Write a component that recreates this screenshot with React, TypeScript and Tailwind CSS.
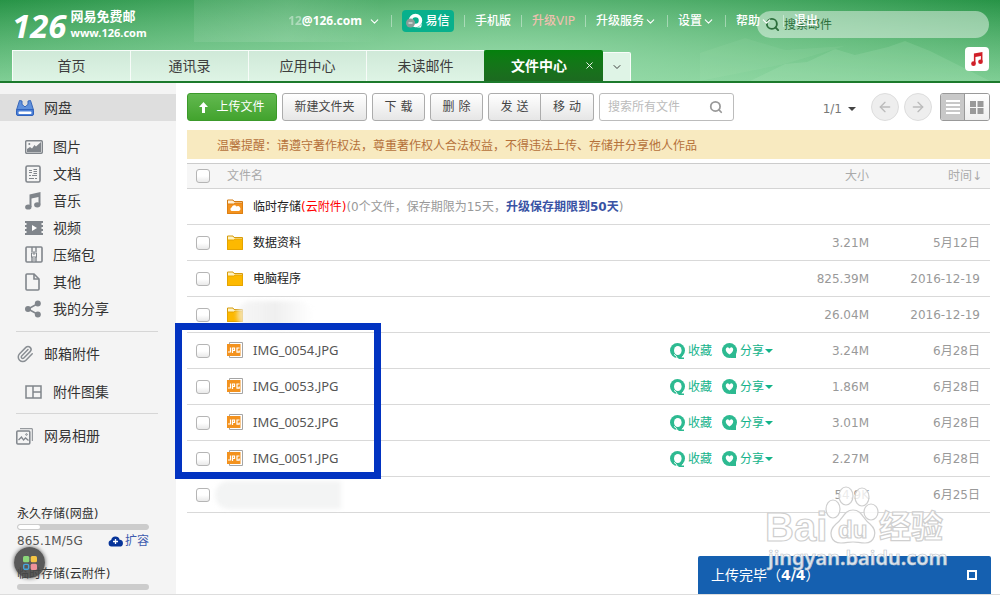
import type { ReactNode } from 'react';
import { ArrowLeft, ArrowRight, ChevronDown, Paperclip, Search, X } from 'lucide-react';

type FileRow = {
  name: string;
  kind: 'cloud' | 'folder' | 'hidden-folder' | 'jpg' | 'hidden';
  size: string;
  date: string;
};

const files: FileRow[] = [
  { name: '临时存储', kind: 'cloud', size: '', date: '' },
  { name: '数据资料', kind: 'folder', size: '3.21M', date: '5月12日' },
  { name: '电脑程序', kind: 'folder', size: '825.39M', date: '2016-12-19' },
  { name: '', kind: 'hidden-folder', size: '26.04M', date: '2016-12-19' },
  { name: 'IMG_0054.JPG', kind: 'jpg', size: '3.24M', date: '6月28日' },
  { name: 'IMG_0053.JPG', kind: 'jpg', size: '1.86M', date: '6月28日' },
  { name: 'IMG_0052.JPG', kind: 'jpg', size: '3.01M', date: '6月28日' },
  { name: 'IMG_0051.JPG', kind: 'jpg', size: '2.27M', date: '6月28日' },
  { name: '', kind: 'hidden', size: '54.9K', date: '6月25日' },
];

const tabs = ['首页', '通讯录', '应用中心', '未读邮件'];

function PictureIcon() {
  return (
    <svg width="18" height="14" viewBox="0 0 18 14">
      <rect x="0.7" y="0.7" width="16.6" height="12.6" rx="1" fill="#f4f4f4" stroke="#80858b" strokeWidth="1.4" />
      <path d="M2 12V9l3-2 2 1.500L9.500 5l1.500 1.500L16 2v10z" fill="#80858b" />
      <circle cx="4.300" cy="4" r="1" fill="#80858b" />
    </svg>
  );
}

function DocIcon() {
  return (
    <svg width="16" height="18" viewBox="0 0 16 18" fill="none" stroke="#80858b">
      <rect x="1" y="1" width="14" height="16" rx="1.5" strokeWidth="1.6" />
      <path d="M4 5.500h3M4 7.500h3M8.500 4.500h3.500M8.500 6.500h3.500M8.500 8.500h3.500M4 10.500h2M7 10.500h5M4 13.500h5M10 13.500h2" />
    </svg>
  );
}

function MusicIcon() {
  return (
    <svg width="16" height="18" viewBox="0 0 16 18" fill="#80858b">
      <path d="M4.500 2.500L15.500 0v12.500h-2V5L6.500 6.500V15h-2z" />
      <ellipse cx="3.300" cy="15" rx="3.200" ry="2.600" />
      <ellipse cx="12.300" cy="12.800" rx="3.200" ry="2.600" />
    </svg>
  );
}

function VideoIcon() {
  return (
    <svg width="18" height="14" viewBox="0 0 18 14">
      <path d="M0 0h18v2h-1.500v2H18v2h-1.500v2H18v2h-1.500v2H18v2H0v-2h1.500v-2H0V8h1.500V6H0V4h1.500V2H0z" fill="#80858b" />
      <path d="M7 4l5 3-5 3z" fill="#fff" />
    </svg>
  );
}

function ZipIcon() {
  return (
    <svg width="18" height="17" viewBox="0 0 18 17" fill="none" stroke="#80858b">
      <rect x="1" y="1" width="16" height="15" rx="1" strokeWidth="1.6" />
      <path d="M7 1v5M11 1v5M7 11v5M11 11v5" strokeWidth="1.400" />
      <rect x="6.500" y="7" width="5" height="4" />
      <path d="M9 5v4M9 12v3" />
    </svg>
  );
}

function OtherIcon() {
  return (
    <svg width="15" height="18" viewBox="0 0 15 18" fill="none" stroke="#80858b" strokeWidth="1.600">
      <path d="M1 2a1 1 0 011-1h7l5 5v10a1 1 0 01-1 1H2a1 1 0 01-1-1z" />
      <path d="M9 1v5h5" />
    </svg>
  );
}

function ShareIcon() {
  return (
    <svg width="16" height="18" viewBox="0 0 16 18" fill="#80858b">
      <path d="M13 3.500L3 9l10 5.500" fill="none" stroke="#80858b" strokeWidth="1.500" />
      <circle cx="12.800" cy="3.500" r="3" />
      <circle cx="3" cy="9" r="3" />
      <circle cx="12.800" cy="14.500" r="3" />
    </svg>
  );
}

function DiskIcon() {
  return (
    <svg width="18" height="16" viewBox="0 0 18 16">
      <path d="M3.500.5L6 1v3.500l1.500 1L9 7l1.500-1.500 1.500-1V1l2.500-.5 3 9.500H.5z" fill="#5f90dc" stroke="#3565b8" />
      <rect x="0.500" y="9.500" width="17" height="6" rx="1.500" fill="#4d80d6" stroke="#2f62bd" />
      <rect x="2.500" y="11.500" width="13" height="2.500" rx="1" fill="#fff" />
    </svg>
  );
}

function AlbumIcon() {
  return (
    <svg width="17" height="17" viewBox="0 0 17 17" fill="none" stroke="#80858b">
      <path d="M4 .7h12.300V13" />
      <rect x="0.800" y="3" width="13" height="13" rx="1" strokeWidth="1.500" />
      <path d="M2.500 12l3-3 2 3 2-2 3 2.500" strokeWidth="1.300" />
      <circle cx="10.500" cy="6.500" r="0.800" />
    </svg>
  );
}

function GalleryIcon() {
  return (
    <svg width="17" height="14" viewBox="0 0 17 14" fill="none" stroke="#80858b" strokeWidth="1.500">
      <path d="M1 1h15v12H1zM8 1v12M8 7h8" />
    </svg>
  );
}

function FileIcon({ kind }: { kind: FileRow['kind'] }) {
  if (kind === 'jpg') {
    return (
      <svg width="16" height="16" viewBox="0 0 16 16">
        <path d="M2.500.5h13v15h-13z" fill="#fff" stroke="#a5a5a5" />
        <rect x="0" y="2" width="13.500" height="12" fill="#f3921e" />
        <path d="M1 10h2.500V5.500M5.500 11V6h2v2.500h-2M12.500 6H10v4.200h2.200V8.500" fill="none" stroke="#fff" strokeWidth="1.200" />
      </svg>
    );
  }
  const cloud = kind === 'cloud';
  return (
    <svg width="16" height="16" viewBox="0 0 16 16">
      <path d="M.5 14.500V1h5.500l1 1.500h8.500v12z" fill={cloud ? '#fff0d6' : '#fff3c4'} stroke={cloud ? '#d27a12' : '#d69b0b'} />
      <path d="M.5 5h6l1.500-1h7.500v10.500H.5z" fill={cloud ? '#f3921e' : '#fdb900'} stroke={cloud ? '#dd7f12' : '#e5a400'} />
      {cloud && <path d="M4.500 12a2 2 0 01.3-3.700A2.500 2.500 0 019.500 7.500 2.300 2.300 0 0112 12z" fill="#fff" />}
    </svg>
  );
}

function CollectIcon() {
  return (
    <svg width="16" height="16" viewBox="0 0 16 16">
      <circle cx="7.500" cy="7.500" r="7.500" fill="#2dba91" />
      <path d="M6 13l7-2-1.500 3.500H14V16H9z" fill="#2dba91" />
      <ellipse cx="7.800" cy="7.500" rx="3.800" ry="4.500" fill="#fff" />
      <path d="M4 11.500c1.500.8 2.500 1.500 3 3.500" stroke="#fff" fill="none" />
    </svg>
  );
}

function HeartIcon() {
  return (
    <svg width="16" height="16" viewBox="0 0 16 16">
      <circle cx="7.500" cy="7.500" r="7.500" fill="#2dba91" />
      <path d="M8 15l6-5v5z" fill="#2dba91" />
      <path d="M7.500 11.500C2 8 3.500 4 6 4.200L7.500 5.500 9 4.200c2.500-.2 4 3.800-1.500 7.300z" fill="#fff" />
    </svg>
  );
}

function Caret({ className }: { className: string }) {
  return (
    <svg width="8" height="4" viewBox="0 0 8 4" className={className}>
      <path d="M0 0h8L4 4z" fill="currentColor" />
    </svg>
  );
}

function CheckBox({ label }: { label: string }) {
  return (
    <input
      type="checkbox"
      aria-label={label}
      className="block size-[14px] appearance-none rounded-[3px] border border-[#b5b5b5] bg-linear-to-b from-white from-50% to-[#e9e9e9]"
    />
  );
}

function MenuLink({ children, arrow, className = 'text-white' }: { children: ReactNode; arrow?: boolean; className?: string }) {
  return (
    <a href="#" className={`flex items-center font-medium ${className}`}>
      {children}
      {arrow && <ChevronDown size={13} strokeWidth={2} />}
    </a>
  );
}

function Divider() {
  return <span className="h-3 w-px bg-white/40" />;
}

function Header() {
  return (
    <header className="relative h-[83px] overflow-hidden border-b-2 border-[#1c7a2c] bg-[radial-gradient(ellipse_60%_170%_at_50%_80%,#a4e2b5c0,transparent),linear-gradient(to_bottom,#239143,#7acb90)]">
      <svg className="absolute right-0 bottom-0" width="300" height="50" viewBox="0 0 300 50">
        <path d="M50 50L85 33l22-2 28-13 20 6 33-8 17-6 25 10 60 30z" fill="#c9f0d2" opacity="0.150" />
        <path d="M0 22l45-15 40 12 60-4-60 18L0 50z" fill="#c9f0d2" opacity="0.080" />
      </svg>
      <form className="absolute top-[11px] right-[11px] flex h-[27px] w-[232px] items-center gap-1 rounded-full bg-white/45 pl-2 text-[#2c6e3c]">
        <Search size={15} strokeWidth={3} />
        <input
          type="search"
          aria-label="搜索邮件"
          placeholder="搜索邮件"
          className="min-w-0 flex-1 bg-transparent text-xs outline-none placeholder:text-[#2c6e3c]"
        />
      </form>

      <div className="pointer-events-none relative flex h-[50px] pl-3">
        <div className="flex w-[182px] items-center gap-1 text-white">
          <span className="font-['Open_Sans'] text-[33px] leading-none font-bold italic">126</span>
          <div className="text-[13px] leading-4 font-bold">
            <p>网易免费邮</p>
            <p className="font-['Noto_Sans'] text-[11px] leading-4">www.126.com</p>
          </div>
        </div>
        <nav className="flex h-[42px] flex-1 items-center gap-[10px] text-xs whitespace-nowrap">
          <a href="#" className="flex h-full w-[187px] items-center justify-end gap-[6px] bg-linear-to-r from-white/8 via-white/12 to-transparent font-['Noto_Sans'] font-bold text-white">
            <span>
              <span className="opacity-40">12</span>@126.com
            </span>
            <ChevronDown size={13} strokeWidth={2} />
          </a>
          <Divider />
          <a href="#" className="flex h-[22px] w-[52px] items-center justify-center gap-[2px] rounded bg-[#08b08c] font-medium text-white">
            <svg width="17" height="16" viewBox="0 0 17 16">
              <circle cx="9.500" cy="7.500" r="5" fill="none" stroke="#fff" strokeWidth="3.500" />
              <path d="M9 14.500c3 0 5-1 7-4l-1 4z" fill="#fff" />
              <circle cx="4.500" cy="10" r="4.500" fill="#8b9c98" />
              <path d="M2.500 10h4" stroke="#fff" />
            </svg>
            易信
          </a>
          <Divider />
          <MenuLink>手机版</MenuLink>
          <Divider />
          <MenuLink className="text-[#f0c0b0]">升级VIP</MenuLink>
          <Divider />
          <MenuLink arrow>升级服务</MenuLink>
          <Divider />
          <MenuLink arrow>设置</MenuLink>
          <Divider />
          <MenuLink arrow>帮助</MenuLink>
          <Divider />
          <MenuLink>退出</MenuLink>
        </nav>
      </div>

      <div className="relative flex h-[31px] items-end pl-3 text-sm text-[#3d3d3d]">
        {tabs.map((tab) => (
          <button key={tab} className="h-[31px] w-[118px] border-t border-l border-white/80 bg-linear-to-b from-[#cfe9d8] to-[#def4e5]">
            {tab}
          </button>
        ))}
        <div className="flex h-[31px] w-[119px] items-center rounded-t-xs bg-linear-to-b from-[#04800c] to-[#1c6a20] text-white">
          <button className="flex-1 pl-[27px] text-left font-bold">文件中心</button>
          <button aria-label="关闭" className="mr-2">
            <X size={11} strokeWidth={2} />
          </button>
        </div>
        <button aria-label="更多标签" className="flex h-[29px] w-[28px] items-center justify-center rounded-tr-xs border-t border-r border-white/80 bg-[#dff4e6]">
          <ChevronDown size={12} strokeWidth={2} />
        </button>
        <button aria-label="音乐" className="mr-[11px] mb-[10px] ml-auto flex size-6 items-center justify-center rounded bg-white">
          <svg width="14" height="14" viewBox="0 0 16 18">
            <path d="M4 2l11-2v12h-2V5L6 6.500V15H4z" fill="#d01f28" />
            <circle cx="3.500" cy="15" r="3" fill="#d01f28" />
            <circle cx="12.500" cy="12.500" r="3" fill="#d01f28" />
          </svg>
        </button>
      </div>
    </header>
  );
}

const folders = [
  { label: '图片', icon: <PictureIcon /> },
  { label: '文档', icon: <DocIcon /> },
  { label: '音乐', icon: <MusicIcon /> },
  { label: '视频', icon: <VideoIcon /> },
  { label: '压缩包', icon: <ZipIcon /> },
  { label: '其他', icon: <OtherIcon /> },
  { label: '我的分享', icon: <ShareIcon /> },
];

function Sidebar() {
  return (
    <aside className="relative flex w-44 shrink-0 flex-col bg-[#f4f4f4] pt-[11px] text-sm text-[#333]">
      <a href="#" className="flex h-[27px] items-center bg-[#dedede] pl-4">
        <span className="w-7"><DiskIcon /></span>网盘
      </a>
      <ul className="mt-3">
        {folders.map((folder) => (
          <li key={folder.label}>
            <a href="#" className="flex h-[27px] items-center pl-[25px]">
              <span className="w-7">{folder.icon}</span>
              {folder.label}
            </a>
          </li>
        ))}
      </ul>
      <hr className="mr-[18px] ml-4 mt-[9px] border-[#d6d6d6]" />
      <a href="#" className="flex h-11 items-center pl-4">
        <span className="w-7"><Paperclip size={18} color="#8a8f94" strokeWidth={2} /></span>邮箱附件
      </a>
      <a href="#" className="flex h-8 items-center pl-[25px]">
        <span className="w-7"><GalleryIcon /></span>附件图集
      </a>
      <hr className="mr-[18px] ml-4 mt-[5px] border-[#d6d6d6]" />
      <a href="#" className="flex h-11 items-center pl-4">
        <span className="w-7"><AlbumIcon /></span>网易相册
      </a>

      <div className="mt-auto w-[149px] pb-1 pl-[17px] text-xs">
        <p className="leading-5">永久存储(网盘)</p>
        <div className="h-[6px] overflow-hidden rounded-full border border-[#ccc] bg-[#ccc]">
          <div className="h-full w-[17%] rounded-full bg-white" />
        </div>
        <div className="flex h-[22px] items-center justify-between text-[#555]">
          865.1M/5G
          <a href="#" className="flex items-center gap-[2px] text-[#3c5aae]">
            <svg width="15" height="12" viewBox="0 0 15 12">
              <path d="M3.500 11.500a3.300 3.300 0 01-.3-6.500 4.300 4.300 0 018.400-.3 3.400 3.400 0 01-.1 6.800z" fill="#073499" />
              <path d="M7.500 4v5M5 6.500h5" stroke="#fff" strokeWidth="1.300" />
            </svg>
            扩容
          </a>
        </div>
        <p className="mt-3 leading-5">临时存储(云附件)</p>
        <div className="h-[6px] rounded-full bg-[#ccc]" />
      </div>

      <button aria-label="应用" className="absolute bottom-4 left-[14px] flex size-[31px] items-center justify-center rounded-full bg-[#484848]/90 shadow-[0_0_4px_#555]">
        <svg width="14" height="14" viewBox="0 0 14 14">
          <rect width="6.300" height="6.300" rx="1.500" fill="#8bd67a" />
          <rect x="7.700" width="6.300" height="6.300" rx="1.500" fill="#f6c544" />
          <rect x="0.700" y="8.400" width="4.900" height="4.900" rx="1.200" fill="none" stroke="#46a5dc" strokeWidth="1.400" />
          <rect x="7.700" y="7.700" width="6.300" height="6.300" rx="1.500" fill="#ee9299" />
        </svg>
      </button>
    </aside>
  );
}

const toolButton = 'h-7 border border-[#acacac] bg-linear-to-b from-white to-[#e6e6e6] text-[#444]';

function Toolbar() {
  return (
    <div className="flex items-center gap-[5px] text-xs whitespace-nowrap">
      <button className="flex h-7 w-[90px] items-center justify-center gap-2 rounded-[3px] border border-[#3c9a2b] bg-linear-to-b from-[#62b94f] to-[#42a32d] text-white">
        <svg width="9" height="11" viewBox="0 0 9 11" fill="#fff">
          <path d="M4.500 0L9 5H6v6H3V5H0z" />
        </svg>
        上传文件
      </button>
      <button className={`${toolButton} w-[85px] rounded-[3px]`}>新建文件夹</button>
      <button className={`${toolButton} w-[53px] rounded-[3px]`}>下 载</button>
      <button className={`${toolButton} w-[53px] rounded-[3px]`}>删 除</button>
      <div className="flex">
        <button className={`${toolButton} w-[53px] rounded-l-[3px]`}>发 送</button>
        <button className={`${toolButton} w-[53px] rounded-r-[3px] border-l-0`}>移 动</button>
      </div>
      <label className="flex h-7 w-[135px] items-center rounded-[3px] border border-[#bcbcbc] bg-white pr-[10px] pl-2">
        <input type="search" aria-label="搜索所有文件" placeholder="搜索所有文件" className="min-w-0 flex-1 outline-none placeholder:text-[#bbb]" />
        <Search size={14} strokeWidth={3} color="#999" />
      </label>
      <button className="mt-1 ml-auto flex items-center gap-[6px] text-[#777]">
        1/1
        <Caret className="text-[#444]" />
      </button>
      <button aria-label="上一页" className="ml-[10px] flex size-7 items-center justify-center rounded-full border border-[#ddd] bg-[#eee] text-[#bbb]">
        <ArrowLeft size={16} />
      </button>
      <button aria-label="下一页" className="flex size-7 items-center justify-center rounded-full border border-[#ddd] bg-[#eee] text-[#bbb]">
        <ArrowRight size={16} />
      </button>
      <div className="ml-[3px] flex h-7 overflow-hidden rounded-[3px] border border-[#999]">
        <button aria-label="列表" className="flex w-6 items-center justify-center border-r border-[#999] bg-[#c8c8c8]">
          <svg width="14" height="14" viewBox="0 0 14 14">
            <path d="M0 1h14M0 5h14M0 9h14M0 13h14" stroke="#fff" strokeWidth="2" />
          </svg>
        </button>
        <button aria-label="缩略图" className="flex w-6 items-center justify-center bg-linear-to-b from-white to-[#eee]">
          <svg width="14" height="13" viewBox="0 0 14 13" fill="#999">
            <path d="M0 0h6v6H0zM7.500 0h6v6h-6zM0 7h6v6H0zM7.500 7h6v6h-6z" />
          </svg>
        </button>
      </div>
    </div>
  );
}

function FileName({ file }: { file: FileRow }) {
  if (file.kind === 'hidden') {
    return <div className="-ml-3 h-7 w-[126px] rounded-l-full bg-[#f3f4f4] blur-[2px]" />;
  }
  return (
    <div className="flex items-center gap-[10px] whitespace-nowrap">
      <FileIcon kind={file.kind} />
      {file.kind === 'hidden-folder' && (
        <div className="-ml-4 h-7 w-[76px] rounded-full bg-linear-to-r from-[#f2f2f2]/60 via-[#efefef] to-transparent blur-[2px]" />
      )}
      {file.kind === 'cloud' && (
        <p className="text-[#999]">
          <span className="text-[#222]">{file.name}</span>
          <span className="text-[#f00]">(云附件)</span>
          (0个文件，保存期限为15天，
          <a href="#" className="font-bold text-[#3953a4]">升级保存期限到50天</a>)
        </p>
      )}
      {file.kind === 'folder' && <a href="#" className="text-[#222]">{file.name}</a>}
      {file.kind === 'jpg' && <a href="#" className="font-['Noto_Sans'] text-[13px] text-[#555]">{file.name}</a>}
    </div>
  );
}

function FileTable() {
  return (
    <div className="relative mt-1">
      <table className="w-full table-fixed border-collapse text-left text-xs text-[#999]">
        <colgroup>
          <col className="w-10" />
          <col />
          <col className="w-[127px]" />
          <col className="w-[72px]" />
          <col className="w-[121px]" />
        </colgroup>
        <thead>
          <tr className="h-[25px] border-t border-b border-t-[#ccc] border-b-[#d4d4d4] bg-[#f6f6f6] text-[#aaa]">
            <th className="pl-[9px]"><CheckBox label="全选" /></th>
            <th className="font-normal">文件名</th>
            <th />
            <th className="text-right font-normal">大小</th>
            <th className="pr-2 text-right font-normal">时间↓</th>
          </tr>
        </thead>
        <tbody>
          {files.map((file, index) => (
            <tr key={index} className="h-9 border-b border-[#d9d9d9]">
              <td className="pl-[9px]">{file.kind !== 'cloud' && <CheckBox label={file.name || '文件'} />}</td>
              <td><FileName file={file} /></td>
              <td>
                {file.kind === 'jpg' && (
                  <div className="flex items-center gap-[10px] text-[#14b38a]">
                    <button className="flex items-center gap-[2px]">
                      <CollectIcon />
                      收藏
                    </button>
                    <button className="flex items-center gap-[2px]">
                      <HeartIcon />
                      分享
                      <Caret className="-ml-px" />
                    </button>
                  </div>
                )}
              </td>
              <td className="text-right">{file.size}</td>
              <td className="pr-[10px] text-right">{file.date}</td>
            </tr>
          ))}
        </tbody>
      </table>
      {/* Highlight around the uploaded pictures */}
      <div className="pointer-events-none absolute top-40 -left-3 h-[156px] w-[206px] border-7 border-[#0233c1]" />
    </div>
  );
}

function Watermark() {
  return (
    <svg className="pointer-events-none absolute right-[50px] bottom-[18px]" width="190" height="92" viewBox="0 0 190 92">
      <g fill="#fff" fillOpacity="0.800" stroke="#cfcfcf" strokeWidth="1.200">
        <text x="5" y="57" fontFamily="Liberation Sans" fontSize="40" fontWeight="700">Bai</text>
        <path d="M93 26c9 0 10 9 17 14 9 8 4 19-5 19-5 0-8-1-12-1s-7 1-12 1c-10 0-14-11-5-19 7-5 8-14 17-14z" />
        <ellipse cx="73" cy="25" rx="7" ry="9" />
        <ellipse cx="86" cy="12" rx="7" ry="9" />
        <ellipse cx="102" cy="13" rx="7" ry="9" />
        <ellipse cx="111" cy="28" rx="7" ry="8" />
        <text x="78" y="54" fontFamily="Liberation Sans" fontSize="24" fontWeight="700">du</text>
        <text x="119" y="54" fontFamily="Noto Sans CJK SC" fontSize="32" fontWeight="700">经验</text>
      </g>
      <text x="8" y="81" fontFamily="Noto Sans" fontSize="20" fontWeight="600" fill="#fff" fillOpacity="0.850" stroke="#b9c0c8" strokeWidth="0.600">
        jingyan.baidu.com
      </text>
    </svg>
  );
}

export default function App() {
  return (
    <div className="relative flex min-h-screen flex-col border-b border-[#ddd] bg-white font-['DejaVu_Sans','Noto_Sans_CJK_SC',sans-serif]">
      <Header />
      <div className="flex flex-1">
        <Sidebar />
        <main className="min-w-0 flex-1 pt-[10px] pr-[10px] pl-[11px]">
          <Toolbar />
          <p className="mt-[9px] bg-[#f8eac0] pt-1 pl-[30px] text-xs leading-[25px] text-[#b5713a]">
            温馨提醒：请遵守著作权法，尊重著作权人合法权益，不得违法上传、存储并分享他人作品
          </p>
          <FileTable />
        </main>
      </div>
      <section className="absolute right-[9px] bottom-0 flex h-[38px] w-[293px] items-center justify-between rounded-t-xs bg-[#1560b0] pr-[14px] pl-[13px] text-sm text-white">
        <p>上传完毕（<b>4/4</b>）</p>
        <button aria-label="展开" className="size-[10px] border-2 border-white" />
      </section>
      <Watermark />
    </div>
  );
}
